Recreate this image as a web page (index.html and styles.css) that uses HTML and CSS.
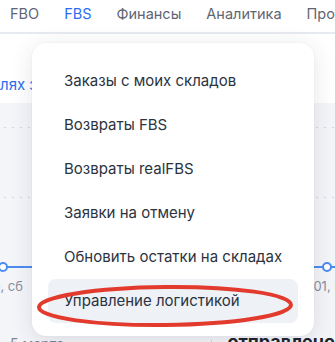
FILE: index.html
```html
<!DOCTYPE html>
<html lang="ru">
<head>
	<meta charset="utf-8">
	<title>FBS</title>
	<link rel="stylesheet" href="styles.css">
</head>
<body>
	<div class="nav">
		<a href="#" class="nav-item">FBO</a>
		<a href="#" class="nav-item active">FBS</a>
		<a href="#" class="nav-item">Финансы</a>
		<a href="#" class="nav-item">Аналитика</a>
		<a href="#" class="nav-item">Продвижение</a>
	</div>

	<div class="intro">
		<a href="#" class="intro-link">лях за 7 дней</a>
	</div>

	<div class="chart">
		<div class="grid-line"></div>
		<div class="grid-line second"></div>
		<div class="series">
			<span class="dot first"></span>
			<span class="dot"></span>
		</div>
		<div class="labels">
			<span class="label left">01 мар, сб</span>
			<span class="label right">01, пт</span>
		</div>
		<div class="bottom">
			<span class="date">5 марта</span>
			<span class="mark"></span>
			<span class="total">отправлено</span>
		</div>
	</div>

	<ul class="menu">
		<li>Заказы с моих складов</li>
		<li>Возвраты FBS</li>
		<li>Возвраты realFBS</li>
		<li>Заявки на отмену</li>
		<li>Обновить остатки на складах</li>
		<li class="hover">Управление логистикой</li>
	</ul>

	<svg class="circle" width="270" height="50" viewBox="0 0 270 50">
		<ellipse cx="135" cy="25" rx="126" ry="19" fill="none" stroke="#e23b2e" stroke-width="4" transform="rotate(-0.6 135 25)"/>
	</svg>
</body>
</html>
```

FILE: styles.css
```css
*{
	margin: 0;
	padding: 0;
	box-sizing: border-box;
}

ul{
	list-style: none
}
a{
	text-decoration: none
}

html, body{
	width: 335px;
	height: 342px;
	overflow: hidden;
}
body{
	font-family: Inter, "Noto Sans", sans-serif;
	background: #fff;
	position: relative;
}

.nav{
	height: 34px;
	border-bottom: 2px solid #e7eaef;
	display: flex;
	align-items: center;
	gap: 25px;
	padding: 0 0 6px 10px;
	white-space: nowrap;
	overflow: hidden;
}
.nav-item{
	font-size: 14.5px;
	color: #5f6673;
}
.nav-item.active{
	color: #2b6cf2;
}

.intro{
	width: 34px;
	height: 69px;
	padding-top: 40px;
	white-space: nowrap;
	overflow: hidden;
}
.intro-link{
	font-size: 15px;
	line-height: 18px;
	color: #2b6cf2;
}

.chart{
	height: 239px;
	background: #f4f5f9;
	padding-top: 24px;
	overflow: hidden;
}
.grid-line{
	height: 1px;
	background: repeating-linear-gradient(90deg, #d3d6dd 0 2px, transparent 2px 8px);
	background-position: 4px 0;
}
.grid-line.second{
	margin-top: 69px;
}

.series{
	margin-top: 64px;
	height: 10px;
	display: flex;
	justify-content: space-between;
	padding-right: 3px;
	background: linear-gradient(#4a8cf0, #4a8cf0) 0 4px / 100% 2px no-repeat;
}
.dot{
	width: 10px;
	height: 10px;
	border-radius: 50%;
	background: #fff;
	border: 2px solid #4a8cf0;
}
.dot.first{
	margin-left: -2px;
}

.labels{
	margin-top: 6px;
	display: flex;
	justify-content: space-between;
	font-size: 13px;
	line-height: 16px;
	color: #8a909c;
	white-space: nowrap;
}
.label.left{
	margin-left: -42px;
}
.label.right{
	margin-right: -13px;
}

.bottom{
	margin-top: 41px;
	display: flex;
	align-items: flex-start;
	padding-left: 10px;
	white-space: nowrap;
}
.date{
	font-size: 14px;
	line-height: 18px;
	color: #7d8490;
}
.mark{
	width: 4px;
	height: 4px;
	margin: 5px 0 0 147px;
	background: #b9d2f7;
}
.total{
	margin: -2px 0 0 16px;
	font-size: 18px;
	font-weight: 700;
	line-height: 18px;
	color: #1d232d;
}

.menu{
	position: absolute;
	left: 32px;
	top: 43px;
	width: 282px;
	height: 293px;
	padding: 16px 16px 13px;
	background: #fff;
	border-radius: 14px;
	box-shadow: 0 4px 22px rgba(30, 40, 60, 0.12), 0 0 2px rgba(30, 40, 60, 0.06);
}
.menu li{
	height: 44px;
	line-height: 44px;
	padding-left: 16px;
	font-size: 15px;
	color: #2b3340;
	border-radius: 8px;
	white-space: nowrap;
}
.menu li.hover{
	background: #eef1f6;
}

.circle{
	position: absolute;
	left: 30px;
	top: 281px;
}
```
